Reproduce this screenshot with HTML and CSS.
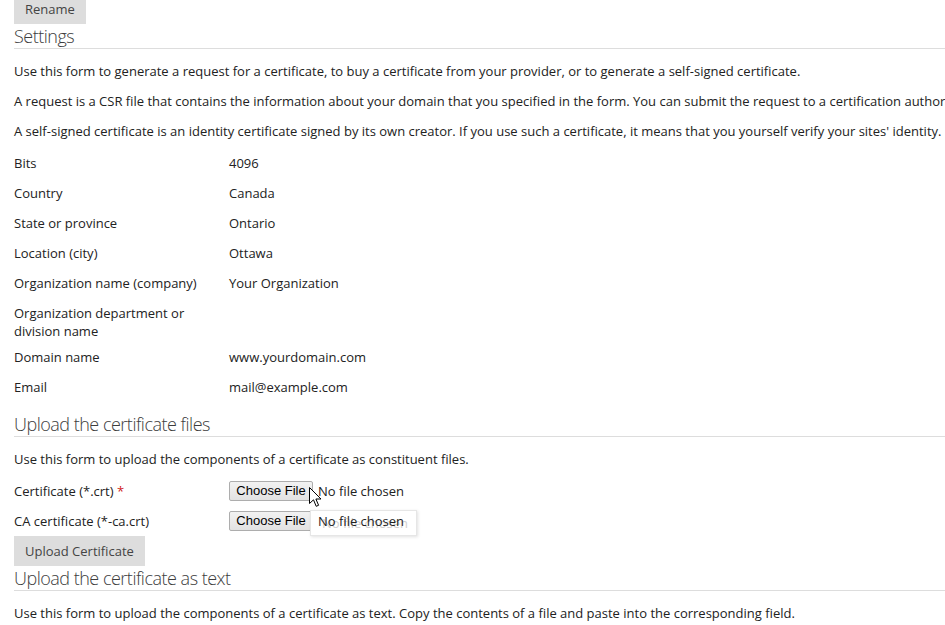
FILE: index.html
```html
<!DOCTYPE html>
<html lang="en">
<head>
    <meta charset="UTF-8">
    <meta name="viewport" content="width=device-width, initial-scale=1.0">
    <title>SSL Certificate</title>
    <link rel="stylesheet" href="styles.css">
</head>
<body>
    <div id="page">
        <button class="btn btn-top">Rename</button>

        <h2 class="section-title">Settings</h2>
        <div class="intro">
            <p>Use this form to generate a request for a certificate, to buy a certificate from your provider, or to generate a self-signed certificate.</p>
            <p>A request is a CSR file that contains the information about your domain that you specified in the form. You can submit the request to a certification authority later.</p>
            <p>A self-signed certificate is an identity certificate signed by its own creator. If you use such a certificate, it means that you yourself verify your sites' identity.</p>
        </div>

        <div class="form-list form-list-spaced">
            <div class="form-row">
                <div class="label">Bits</div>
                <div class="value">4096</div>
            </div>
            <div class="form-row">
                <div class="label">Country</div>
                <div class="value">Canada</div>
            </div>
            <div class="form-row">
                <div class="label">State or province</div>
                <div class="value">Ontario</div>
            </div>
            <div class="form-row">
                <div class="label">Location (city)</div>
                <div class="value">Ottawa</div>
            </div>
            <div class="form-row">
                <div class="label">Organization name (company)</div>
                <div class="value">Your Organization</div>
            </div>
            <div class="form-row">
                <div class="label">Organization department or division name</div>
                <div class="value"></div>
            </div>
            <div class="form-row">
                <div class="label">Domain name</div>
                <div class="value">www.yourdomain.com</div>
            </div>
            <div class="form-row">
                <div class="label">Email</div>
                <div class="value">mail@example.com</div>
            </div>
        </div>

        <h2 class="section-title">Upload the certificate files</h2>
        <div class="intro">
            <p>Use this form to upload the components of a certificate as constituent files.</p>
        </div>

        <div class="form-list">
            <div class="form-row">
                <div class="label">Certificate (*.crt) <span class="required">*</span></div>
                <div class="value file-field">
                    <span class="file-btn">Choose File</span>
                    <span class="file-name">No file chosen</span>
                    <svg class="cursor" width="13" height="21" viewBox="0 0 13 21">
                        <path d="M0.5 0.5 L0.5 16.5 L4.5 12.8 L7.2 19.3 L9.6 18.3 L6.9 12 L12 12 Z" fill="#fff" stroke="#000" stroke-width="1" stroke-linejoin="miter"/>
                    </svg>
                </div>
            </div>
            <div class="form-row">
                <div class="label">CA certificate (*-ca.crt)</div>
                <div class="value file-field">
                    <span class="file-btn">Choose File</span>
                    <div class="tooltip">No file chosen</div>
                    <span class="file-name">No file chosen</span>
                </div>
            </div>
        </div>
        <button class="btn">Upload Certificate</button>

        <h2 class="section-title">Upload the certificate as text</h2>
        <div class="intro">
            <p>Use this form to upload the components of a certificate as text. Copy the contents of a file and paste into the corresponding field.</p>
        </div>
    </div>
</body>
</html>
```

FILE: styles.css
```css
body {
    margin: 0;
    overflow: hidden;
    background-color: #fff;
    color: #222;
    font-family: "Open Sans", Arial, sans-serif;
    font-size: 13px;
    line-height: 18px;
}

#page {
    width: 1100px;
    padding-left: 14px;
}

.btn {
    display: block;
    height: 30px;
    padding: 0 11px;
    background-color: #ddd;
    color: #444;
    border: none;
    font-family: "Open Sans", Arial, sans-serif;
    font-size: 13px;
    cursor: pointer;
}

.btn-top {
    margin-top: -6px;
}

.section-title {
    margin: 0;
    height: 24px;
    line-height: 24px;
    font-size: 18px;
    font-weight: 300;
    letter-spacing: -0.5px;
    color: #3d3d3d;
    border-bottom: 1px solid #ddd;
}

.intro {
    padding-top: 13px;
    margin-bottom: 8px;
}

.intro p {
    margin: 0 0 12px;
}

.intro p:last-child {
    margin-bottom: 0;
}

.form-list-spaced {
    margin-bottom: 10px;
}

.form-row {
    display: flex;
    min-height: 30px;
    padding: 6px 0 2px;
    box-sizing: border-box;
}

.label {
    width: 215px;
    flex-shrink: 0;
    padding-right: 30px;
    box-sizing: border-box;
}

.required {
    color: #d02020;
}

.file-field {
    position: relative;
    display: flex;
    align-items: center;
    height: 18px;
}

.file-btn {
    display: inline-block;
    width: 84px;
    height: 20px;
    box-sizing: border-box;
    border: 1px solid #adadad;
    border-radius: 2px;
    background: linear-gradient(#f2f2f2, #e2e2e2);
    color: #000;
    font-family: "Liberation Sans", Arial, sans-serif;
    font-size: 13px;
    line-height: 18px;
    text-align: center;
}

.file-name {
    position: relative;
    margin-left: 5px;
    color: #222;
}

/* native title tooltip shown under the second file input */
.tooltip {
    position: absolute;
    left: 81px;
    top: -2px;
    width: 107px;
    height: 26px;
    padding-left: 11px;
    box-sizing: border-box;
    background-color: #fff;
    border: 1px solid #e6e6e6;
    box-shadow: 1px 1px 3px rgba(0, 0, 0, 0.12);
    color: #d0d0d0;
    line-height: 25px;
}

.cursor {
    position: absolute;
    left: 80px;
    top: 5px;
}
```
